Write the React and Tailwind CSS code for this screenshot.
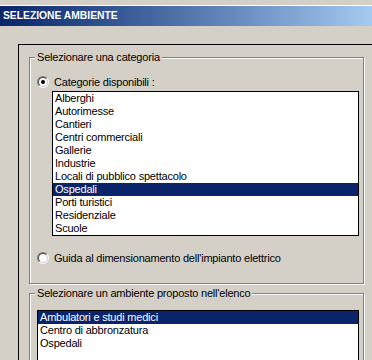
import React from "react";

const font = { fontFamily: '"Liberation Sans", Arial, sans-serif' };

function Radio({ checked }) {
  return (
    <div className="w-[12px] h-[12px] rounded-full border border-t-[#808080] border-l-[#808080] border-b-white border-r-white shrink-0">
      <div className="w-[10px] h-[10px] rounded-full border border-t-[#404040] border-l-[#404040] border-b-[#d4d0c8] border-r-[#d4d0c8] bg-white flex items-center justify-center">
        {checked && <div className="w-[4px] h-[4px] rounded-full bg-black" />}
      </div>
    </div>
  );
}

function Item({ label, selected }) {
  return (
    <div
      className={
        "h-[13px] leading-[13px] pl-[2px] whitespace-nowrap " +
        (selected ? "bg-[#0a246a] text-white" : "text-black")
      }
    >
      {label}
    </div>
  );
}

const categories = [
  "Alberghi",
  "Autorimesse",
  "Cantieri",
  "Centri commerciali",
  "Gallerie",
  "Industrie",
  "Locali di pubblico spettacolo",
  "Ospedali",
  "Porti turistici",
  "Residenziale",
  "Scuole",
];

const ambienti = ["Ambulatori e studi medici", "Centro di abbronzatura", "Ospedali"];

export default function App() {
  return (
    <div
      className="w-[372px] h-[360px] overflow-hidden bg-[#d4d0c8] text-[11px] tracking-[-0.2px] text-black flex flex-col"
      style={font}
    >
      <div className="h-[5px] shrink-0" />
      <div className="h-px bg-white shrink-0" />
      <div className="h-[20px] shrink-0 bg-gradient-to-r from-[#0a246a] to-[#a6caf0] flex items-center pl-[3px]">
        <span className="text-white font-bold text-[10.3px] tracking-normal leading-none">
          SELEZIONE AMBIENTE
        </span>
      </div>
      <div className="mt-[18px] ml-[18px] flex-1 border-l border-t border-black pl-[10px] pt-[12px]">
        {/* Group 1 */}
        <div className="relative w-[335px] h-[227px] border border-[#808080] shadow-[inset_1px_1px_0_#fff,1px_1px_0_#fff]">
          <span className="absolute left-[5px] top-[-7px] px-[2px] bg-[#d4d0c8] leading-[13px] whitespace-nowrap">
            Selezionare una categoria
          </span>
          <div className="flex flex-col pt-[18px]">
            <div className="flex items-center h-[12px] pl-[7px] gap-[5px]">
              <Radio checked />
              <span className="leading-[13px]">Categorie disponibili :</span>
            </div>
            <div className="ml-[22px] mt-[3px] w-[307px] border border-black bg-white">
              {categories.map((c) => (
                <Item key={c} label={c} selected={c === "Ospedali"} />
              ))}
            </div>
            <div className="flex items-center h-[12px] pl-[7px] gap-[5px] mt-[16px]">
              <Radio />
              <span className="leading-[13px]">Guida al dimensionamento dell'impianto elettrico</span>
            </div>
          </div>
        </div>
        {/* Group 2 */}
        <div className="relative mt-[9px] w-[335px] h-[120px] border border-[#808080] shadow-[inset_1px_1px_0_#fff,1px_1px_0_#fff]">
          <span className="absolute left-[5px] top-[-7px] px-[2px] bg-[#d4d0c8] leading-[13px] whitespace-nowrap">
            Selezionare un ambiente proposto nell'elenco
          </span>
          <div className="ml-[7px] mt-[16px] w-[322px] border border-black bg-white pb-[20px]">
            {ambienti.map((a, i) => (
              <Item key={a} label={a} selected={i === 0} />
            ))}
          </div>
        </div>
      </div>
    </div>
  );
}
